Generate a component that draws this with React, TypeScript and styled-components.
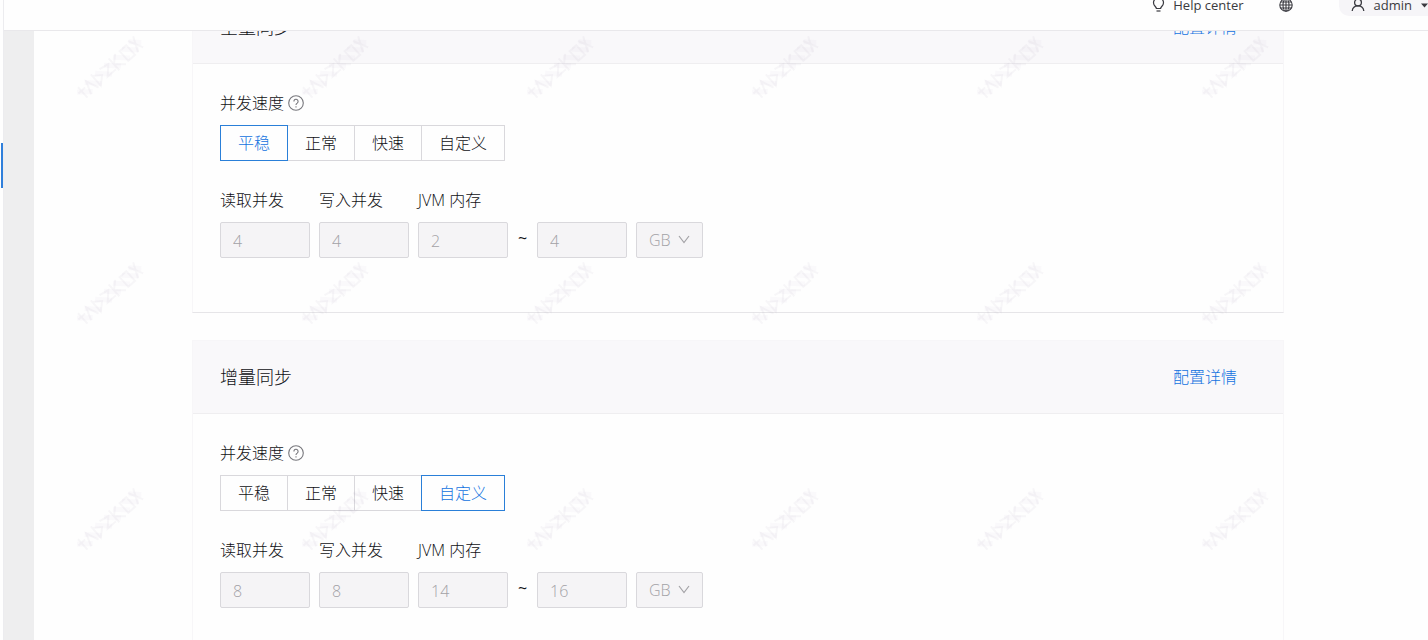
import React from "react";
import styled, { createGlobalStyle } from "styled-components";

const GlobalStyle = createGlobalStyle`
  *, *::before, *::after { box-sizing: border-box; }
  body {
    margin: 0;
    background: #fefefe;
    color: #101014;
    font-family: "Open Sans", "Noto Sans CJK SC", sans-serif;
    font-size: 16px;
    font-weight: 300;
    line-height: 24px;
  }
  button, input, select { font: inherit; color: inherit; }
`;

const Page = styled.div`
  position: relative;
  display: flex;
  height: 100vh;
  overflow: hidden;
`;

const SideRail = styled.aside`
  flex: none;
  width: 4px;
  padding: 143px 0 0 1px;
  border-right: 1px solid #ececef;
`;

const ActiveMark = styled.div`
  width: 2px;
  height: 45px;
  background: #2f7fdb;
`;

const Column = styled.div`
  flex: 1;
  min-width: 0;
  display: flex;
  flex-direction: column;
`;

const TopBar = styled.header`
  flex: none;
  height: 31px;
  overflow: hidden;
  border-bottom: 1px solid #e9e8eb;
`;

const TopBarRow = styled.div`
  display: flex;
  justify-content: flex-end;
  align-items: center;
  height: 22px;
  margin-top: -6px;
  font-size: 13px;
  font-weight: 400;
  color: #3a3a40;
`;

const HelpLink = styled.a`
  display: flex;
  align-items: center;
  gap: 8px;
  margin-right: 35px;
  color: inherit;
  text-decoration: none;
`;

const IconButton = styled.button`
  display: flex;
  margin: 0 46px 0 0;
  padding: 0;
  border: 0;
  background: none;
`;

const UserButton = styled.button`
  display: flex;
  align-items: center;
  gap: 9px;
  height: 22px;
  padding: 0 0 0 12px;
  border: 0;
  border-radius: 0 0 0 10px;
  background: #f6f5f8;
`;

const Workspace = styled.div`
  flex: 1;
  min-height: 0;
  overflow: hidden;
  border-left: 30px solid #eeeeef;
`;

const Content = styled.main`
  display: flex;
  flex-direction: column;
  gap: 27px;
  margin: -41px 144px 0 158px;
`;

const Card = styled.section`
  height: 323px;
  border: 1px solid #f7f6f8;
  border-bottom-color: #e6e5e8;
`;

const CardHeader = styled.div`
  display: flex;
  justify-content: space-between;
  align-items: center;
  height: 73px;
  padding: 0 46px 0 27px;
  border-bottom: 1px solid #efeef0;
  background: #f9f8fa;
`;

const CardTitle = styled.h2`
  margin: 0;
  font-size: 18px;
  font-weight: 300;
`;

const DetailLink = styled.a`
  color: #1272e0;
  text-decoration: none;
`;

const CardBody = styled.div`
  padding: 27px 27px 0;
`;

const SpeedLabel = styled.div`
  display: flex;
  align-items: center;
  gap: 4px;
  margin-bottom: 10px;
`;

const Segments = styled.div`
  display: flex;
  margin-bottom: 27px;
`;

const Segment = styled.button<{ $active: boolean }>`
  position: relative;
  z-index: ${(p) => (p.$active ? 1 : 0)};
  height: 36px;
  margin: 0;
  padding: 0 17px;
  border: 1px solid ${(p) => (p.$active ? "#2a7fd8" : "#d9d8dc")};
  background: #fefefe;
  color: ${(p) => (p.$active ? "#1272e0" : "inherit")};
  & + & { margin-left: -1px; }
`;

const Fields = styled.div`
  display: flex;
  gap: 9px;
`;

const Field = styled.div`
  display: flex;
  flex-direction: column;
  gap: 10px;
`;

const Range = styled.div`
  display: flex;
  gap: 9px;
`;

const NumberBox = styled.input`
  width: 90px;
  height: 36px;
  padding: 2px 12px 0;
  border: 1px solid #d9d8dc;
  border-radius: 2px;
  background: #f5f4f6;
  color: #a3a2a6;
`;

const Tilde = styled.span`
  width: 11px;
  line-height: 32px;
  text-align: center;
  font-weight: 400;
`;

const UnitBox = styled.div`
  position: relative;
  svg {
    position: absolute;
    top: 13px;
    right: 13px;
    pointer-events: none;
  }
`;

const UnitSelect = styled.select`
  appearance: none;
  width: 67px;
  height: 36px;
  padding: 0 12px;
  border: 1px solid #d9d8dc;
  border-radius: 2px;
  background: #f5f4f6;
  color: #a3a2a6;
  opacity: 1;
`;

const WatermarkLayer = styled.svg`
  position: absolute;
  inset: 0;
  width: 100%;
  height: 100%;
  pointer-events: none;
`;

function BulbIcon() {
  return (
    <svg width="13" height="16" viewBox="0 0 13 16" fill="none" stroke="#3a3a40" strokeWidth="1.2">
      <path d="M4.4 11.5C4.4 9.8 1.5 8.8 1.5 5.7a5 5 0 0 1 10 0c0 3.1-2.9 4.1-2.9 5.8z" />
      <path d="M4.5 14h4" />
    </svg>
  );
}

function GlobeIcon() {
  return (
    <svg width="14" height="14" viewBox="0 0 14 14" fill="none" stroke="#3a3a40" strokeWidth="1.1">
      <circle cx="7" cy="7" r="6.2" />
      <ellipse cx="7" cy="7" rx="3" ry="6.2" />
      <path d="M7 1v12M1 7h12M1.8 4h10.4M1.8 10h10.4" />
    </svg>
  );
}

function UserIcon() {
  return (
    <svg width="14" height="14" viewBox="0 0 14 14" fill="none" stroke="#3a3a40" strokeWidth="1.3">
      <circle cx="7" cy="4.5" r="3.4" />
      <path d="M1.2 13c.3-3 2.6-5.1 5.8-5.100s5.500 2.100 5.800 5.100" />
    </svg>
  );
}

function CaretIcon() {
  return (
    <svg width="7" height="5" viewBox="0 0 7 5">
      <path d="M0 0.500h7L3.500 4.500z" fill="#3a3a40" />
    </svg>
  );
}

function QuestionIcon() {
  return (
    <svg width="16" height="16" viewBox="0 0 16 16" fill="none" stroke="#77777c" strokeWidth="1.1">
      <circle cx="8" cy="8" r="7.3" />
      <path d="M5.9 6.4a2.1 2.1 0 1 1 3.3 1.7C8.4 8.6 8 8.900 8 9.900" />
      <path d="M8 11.200v1.200" />
    </svg>
  );
}

function ChevronIcon() {
  return (
    <svg width="12" height="9" viewBox="0 0 12 9" fill="none" stroke="#a3a2a6" strokeWidth="1.2">
      <path d="M1 1l5 6.500L11 1" />
    </svg>
  );
}

function Watermark() {
  return (
    <WatermarkLayer aria-hidden="true">
      <defs>
        <pattern id="mark" width="225" height="226" patternUnits="userSpaceOnUse" x="0" y="-48">
          <g transform="translate(111 115) rotate(-42)" fill="none" stroke="#8c7096">
            <path
              d="M-38-7v14M-42-2h9M-33 7l5-13 5 13M-20-8v15l8-7-8-6M-10-6l10 2-9 9h11M4-8v16M4 0l8-7M4 0l9 8M17-6h9v13h-9zM30-8l7 15M37-8l-7 15"
              strokeWidth="2"
              strokeOpacity="0.06"
            />
            <path d="M-42-4L-30 6M-30-6l12 12M-16-6L-4 6M-4-6L8 6M8-6l12 12M20-6l12 12M30-7l9 9" strokeWidth="5" strokeOpacity="0.03" />
          </g>
        </pattern>
      </defs>
      <rect y="31" width="1300" height="100%" fill="url(#mark)" />
    </WatermarkLayer>
  );
}

const speeds = ["平稳", "正常", "快速", "自定义"];

interface SyncCardProps {
  id: string;
  title: string;
  speed: string;
  read: string;
  write: string;
  min: string;
  max: string;
}

function SyncCard({ id, title, speed, read, write, min, max }: SyncCardProps) {
  return (
    <Card>
      <CardHeader>
        <CardTitle>{title}</CardTitle>
        <DetailLink href="#">配置详情</DetailLink>
      </CardHeader>
      <CardBody>
        <SpeedLabel id={`${id}-speed`}>
          并发速度
          <QuestionIcon />
        </SpeedLabel>
        <Segments role="group" aria-labelledby={`${id}-speed`}>
          {speeds.map((s) => (
            <Segment key={s} type="button" $active={s === speed} aria-pressed={s === speed}>
              {s}
            </Segment>
          ))}
        </Segments>
        <Fields>
          <Field>
            <label htmlFor={`${id}-read`}>读取并发</label>
            <NumberBox id={`${id}-read`} defaultValue={read} disabled />
          </Field>
          <Field>
            <label htmlFor={`${id}-write`}>写入并发</label>
            <NumberBox id={`${id}-write`} defaultValue={write} disabled />
          </Field>
          <Field>
            <label htmlFor={`${id}-min`}>JVM 内存</label>
            <Range>
              <NumberBox id={`${id}-min`} defaultValue={min} disabled />
              <Tilde>~</Tilde>
              <NumberBox aria-label="JVM 内存" defaultValue={max} disabled />
              <UnitBox>
                <UnitSelect aria-label="JVM 内存" defaultValue="GB" disabled>
                  <option>GB</option>
                </UnitSelect>
                <ChevronIcon />
              </UnitBox>
            </Range>
          </Field>
        </Fields>
      </CardBody>
    </Card>
  );
}

export default function App() {
  return (
    <>
      <GlobalStyle />
      <Page>
        <SideRail>
          <ActiveMark />
        </SideRail>
        <Column>
          <TopBar>
            <TopBarRow>
              <HelpLink href="#">
                <BulbIcon />
                Help center
              </HelpLink>
              <IconButton type="button" aria-label="Language">
                <GlobeIcon />
              </IconButton>
              <UserButton type="button">
                <UserIcon />
                admin
                <CaretIcon />
              </UserButton>
            </TopBarRow>
          </TopBar>
          <Workspace>
            <Content>
              <SyncCard id="full" title="全量同步" speed="平稳" read="4" write="4" min="2" max="4" />
              <SyncCard id="incremental" title="增量同步" speed="自定义" read="8" write="8" min="14" max="16" />
            </Content>
          </Workspace>
        </Column>
        <Watermark />
      </Page>
    </>
  );
}
